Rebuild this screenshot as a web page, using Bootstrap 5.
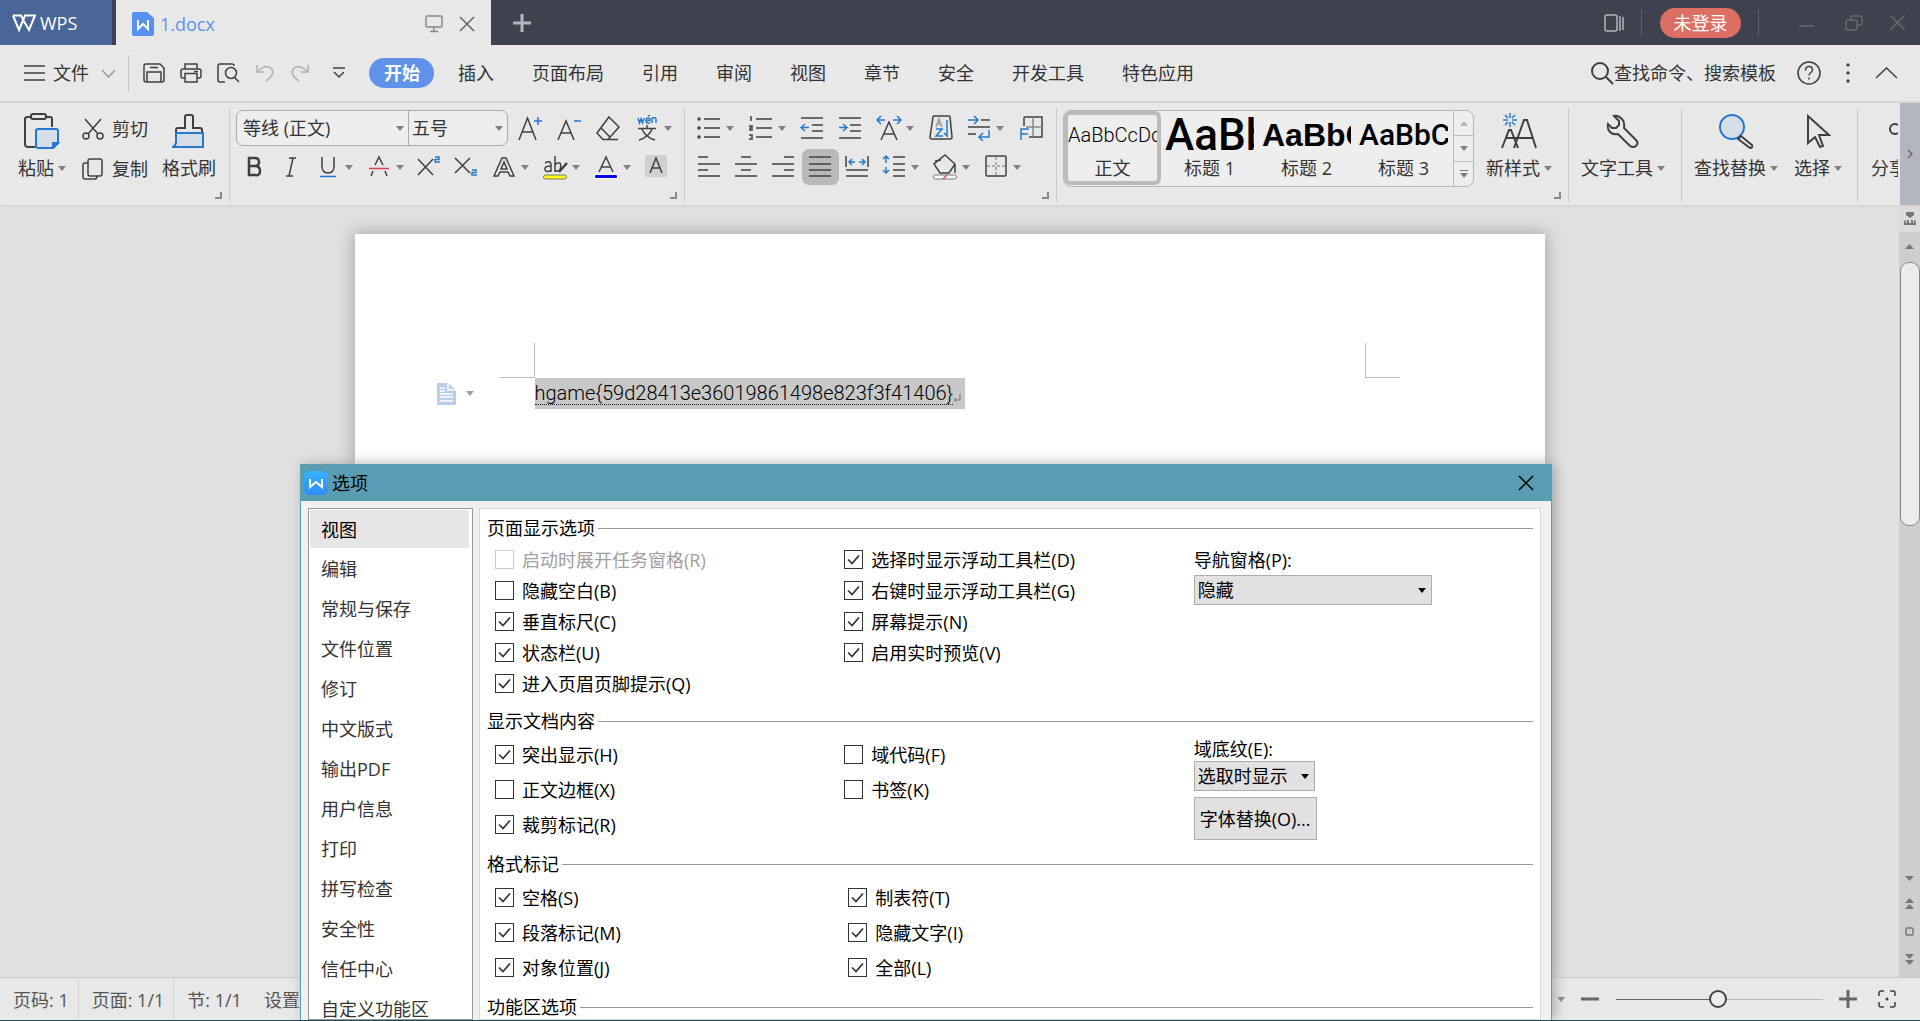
<!DOCTYPE html>
<html lang="zh-CN">
<head>
<meta charset="utf-8">
<meta name="viewport" content="width=device-width, initial-scale=1">
<title>1.docx - WPS</title>
<link href="https://cdn.jsdelivr.net/npm/bootstrap@5.3.0/dist/css/bootstrap.min.css" rel="stylesheet">
<style>
:root{--ink:#404040;--blue:#2478d0;--tri:url("data:image/svg+xml,%3Csvg xmlns='http://www.w3.org/2000/svg' viewBox='0 0 8 5'%3E%3Cpath d='M0 0h8L4 5z' fill='%23808080'/%3E%3C/svg%3E");--trib:url("data:image/svg+xml,%3Csvg xmlns='http://www.w3.org/2000/svg' viewBox='0 0 8 5'%3E%3Cpath d='M0 0h8L4 5z' fill='%23000'/%3E%3C/svg%3E")}
body{font-family:"Open Sans","Noto Sans CJK SC",sans-serif;font-size:18px;font-weight:400;line-height:24px;color:#333;background:#e8e8e8;border-bottom:1px solid #1c4c5e}
button,select,input{font:inherit;color:inherit}
button{background:none;border:0;padding:0;white-space:nowrap}
a{color:inherit;text-decoration:none}
svg{display:block;flex:none;fill:none;stroke:var(--ink);stroke-width:1.5}
svg .b{stroke:var(--blue)}
svg .l{stroke:var(--blue);fill:#d5dee7}
/* title bar */
.titlebar{height:45px;background:#3f424e}
.titlebar svg{stroke:#b4b6bd}
.wps-home{width:112px;background:#496697;color:#fff;margin-right:4px;padding:1px 0 0 12px}
.doctab{width:375px;background:#e8e8e8;color:#5b93ee;padding:2px 16px 0 16px}
.doctab svg{stroke:#888}
.tbsep{width:1px;height:28px;background:#5b5e69}
.login{width:81px;height:30px;border-radius:15px;background:#db6f63;color:#fff}
.titlebar .dim{stroke:#656873}
/* menu */
.menubar{height:58px;border-bottom:2px solid #d6d6d6}
.menubar .navitems{gap:38px;margin-left:24px}
.current{background:#6092ea;color:#fff;font-weight:700;border-radius:15px;padding:3px 15px;width:65px;margin-right:-14px}
.vsep{width:1px;height:36px;background:#c4c4c4;margin:0 14px 0 12px}
/* ribbon */
.ribbon{height:102px;box-shadow:0 1px 2px #ccc;z-index:1}
.rgroup{position:relative;border-right:1px solid #ccc;height:94px;margin-top:5px}
.launch{position:absolute;right:7px;bottom:3px;width:7px;height:7px;border:solid #8a8a8a;border-width:0 2px 2px 0}
.bigbtn{display:flex;flex-direction:column;align-items:center;gap:7px;padding-top:5px}
.lab{display:flex;align-items:center;gap:4px}
.tri{width:8px;height:5px;background:var(--tri);flex:none}
.tri.up{transform:rotate(180deg)}
.toolrow{height:36px;margin-bottom:3px}
.tool{display:flex;align-items:center;width:37px;height:36px;padding-left:5px;border-radius:7px}
.tool.dd{width:51px;gap:4px}
.tool.on{background:#b9b9b9}
.fontbox{height:36px;border:1px solid #aaa;background:#eee var(--tri) no-repeat right 4px center/8px 5px;appearance:none;padding:0 6px}
.fontname{width:173px;border-radius:7px 0 0 7px}
.fontsize{width:100px;border-radius:0 7px 7px 0;margin-left:-1px;padding-left:3px}
.gallery{width:411px;height:77px;border:1px solid #b6b6b6;border-radius:8px;background:#eee;overflow:hidden}
.stylecell{width:97px;height:74px;border:4px solid transparent;border-radius:6px;overflow:hidden;display:flex;flex-direction:column}
.stylecell.on{border-color:#bbb}
.sample{height:41px;width:89px;line-height:40px;color:#000;overflow:hidden;text-align:left;font-family:Roboto,sans-serif;font-weight:500}
.stylecell>span+span{width:89px}
.s0{font-size:20px;font-weight:300}.s1{font-size:44px}.s2{font-size:32px;font-family:"Liberation Sans",sans-serif;font-weight:700}.s3{font-size:30px}
.galscroll{width:20px;border-left:1px solid #bbb}
.galscroll button{flex:1;display:flex;flex-direction:column;align-items:center;justify-content:center;gap:2px}
.galscroll button+button{border-top:1px solid #bbb}
.galscroll i.bar{width:8px;height:1px;background:#777}
.more{width:20px;background:#b3b6c0}
/* document */
.work{background:#e1e1e1;min-height:0}
.page{width:1190px;margin:29px auto 0;background:#fff;box-shadow:0 0 16px 2px #a8a8a8;padding-top:109px}
.cornerbox{width:35px;height:35px;border:solid #bbb;border-width:0 0 1px 0}
.cl{border-right-width:1px}.cr{border-left-width:1px}
.picked{background:#c8c8c8;color:#000;font-family:Roboto,sans-serif;font-size:20px;font-weight:300;height:31px;padding-right:4px}
.picked span{border-bottom:1px dotted #222;line-height:22px}
.vscroll{width:21px;background:#cecece}
.vscroll svg{stroke:none;fill:#777}
.ruler{height:27px;background:#dcdcdc;width:100%}
.thumb{width:20px;height:264px;border:1px solid #888;border-radius:9px;background:#ececec}
/* status */
.status{height:43px;border-top:1px solid #c8c8c8;color:#555}
.status .cell{line-height:36px;padding:2px 9px 0 13px}
.status .cell+.cell{border-left:1px solid #d2d2d2}
.zoomer{appearance:none;width:207px;height:20px;background:linear-gradient(90deg,#666 50%,#b8b8b8 50%) center/100% 1px no-repeat}
.zoomer::-webkit-slider-thumb{appearance:none;width:18px;height:18px;border:2px solid #444;border-radius:50%;background:#eee}
/* options dialog */
.dlg{position:absolute;left:300px;top:464px;bottom:0;width:1252px;background:#f0f0f0;border:solid #5c9fb4;border-width:0 1px;z-index:5;overflow:hidden;box-shadow:3px 0 12px #aaa;color:#000}
.dlgtitle{height:37px;background:#5a9db3;padding:0 17px 0 3px}
.dlgside{width:165px;border:1px solid #999;background:#fff;padding:1px 3px 0 1px;color:#333}
.dlgside a{display:block;padding:8px 11px;height:40px}
.dlgside a.on{background:#e6e6e6;height:38px;margin-bottom:1px;color:#000}
.dlgpane{border:1px solid #d9d9d9;background:#fff;padding:7px 0 0}
.legendrow{margin:0 7px 0 7px;gap:3px}
.legendrow hr{flex:1;margin:0;border-top:1px solid #999;opacity:1}
.optcols{padding:4px 0 10px 15px;margin-right:-3px}
.opt{display:flex;align-items:center;gap:8px;white-space:nowrap}
.r31 .opt{height:31px}.r35 .opt{height:35px}
.opt input{appearance:none;width:19px;height:19px;border:1px solid #333;background:#fff;margin:0;flex:none}
.opt input:checked{background:#fff url("data:image/svg+xml,%3Csvg xmlns='http://www.w3.org/2000/svg' viewBox='0 0 17 17'%3E%3Cpath d='M3 8.500l4 4 7-8' fill='none' stroke='%23333' stroke-width='1.7'/%3E%3C/svg%3E")}
.opt.off{color:#a0a0a0}.opt.off input{border-color:#ccc}
.picksel{appearance:none;height:30px;border:1px solid #adadad;border-radius:0;background:#e1e1e1 var(--trib) no-repeat right 5px center/8px 5px;padding:0 3px;display:block}
.pushbtn{height:43px;width:123px;border:1px solid #adadad;background:#e1e1e1;margin-top:6px}
.w238{width:238px}.w121{width:121px}
</style>
</head>
<body class="vh-100 d-flex flex-column overflow-hidden position-relative">
<header class="titlebar d-flex align-items-stretch">
  <button class="wps-home d-flex align-items-center gap-1"><svg width="24" height="18" viewBox="0 0 24 18" style="stroke:#fff;stroke-width:2"><path d="M1 1.500h8l4 8M1 1.500L7 16l6-14.500h10L17 16l-4-7"/></svg>WPS</button>
  <div class="doctab d-flex align-items-center">
    <svg width="22" height="24" viewBox="0 0 22 24" style="stroke:none"><path d="M2 0h13l7 6v16q0 2-2 2H2q-2 0-2-2V2Q0 0 2 0z" fill="#5590f2"/><path d="M6 8v9l5-5 5 5V8" stroke="#fff" stroke-width="2"/></svg>
    <span class="ms-1 me-auto" style="padding-left:2px">1.docx</span>
    <svg width="18" height="18" viewBox="0 0 18 18"><rect x="1" y="1" width="16" height="11" rx="1"/><path d="M9 12v4M5 16.500h8"/></svg>
    <button class="ms-3" aria-label="关闭"><svg width="16" height="16" viewBox="0 0 16 16" style="stroke:#666"><path d="M1 1l14 14M15 1L1 15"/></svg></button>
  </div>
  <button class="me-auto" style="padding-left:22px" aria-label="新建"><svg width="18" height="18" viewBox="0 0 18 18" style="stroke-width:3"><path d="M9 0v18M0 9h18"/></svg></button>
  <div class="d-flex align-items-center">
    <svg width="20" height="18" viewBox="0 0 20 18"><rect x="1" y="1" width="12" height="16" rx="2"/><path d="M16 2v15M19 3v13"/></svg>
    <span class="tbsep" style="margin:0 18px 0 17px"></span>
    <button class="login">未登录</button>
    <span class="tbsep me-4" style="margin-left:17px"></span>
    <svg class="dim ms-3" width="15" height="16" viewBox="0 0 15 16"><path d="M0 11h15"/></svg>
    <svg class="dim" style="margin:0 26px 0 28px" width="22" height="16" viewBox="0 0 22 16"><rect x="4" y="5" width="11" height="10" rx="2"/><path d="M9 5V3q0-2 2-2h7q2 0 2 2v5q0 2-2 2h-3"/></svg>
    <svg class="dim" style="margin-right:15px" width="15" height="15" viewBox="0 0 15 15"><path d="M0 0l15 15M15 0L0 15"/></svg>
  </div>
</header>

<nav class="menubar d-flex align-items-center">
  <button class="d-flex align-items-center gap-2 ms-4"><svg width="21" height="16" viewBox="0 0 21 16"><path d="M0 1h21M0 8h21M0 15h21"/></svg>文件<svg class="ms-1" width="15" height="9" viewBox="0 0 15 9" style="stroke:#999"><path d="M1 1l6.500 7L14 1"/></svg></button>
  <span class="vsep"></span>
  <div class="d-flex align-items-center" style="gap:15px">
    <button aria-label="保存"><svg width="22" height="20" viewBox="0 0 22 20"><path d="M3 1h14l4 4v12q0 2-2 2H3q-2 0-2-2V3q0-2 2-2zM4 19V9h14v10M7 4.500h8"/></svg></button>
    <button aria-label="打印"><svg width="22" height="20" viewBox="0 0 22 20"><path d="M5 6V1h12v5M5 15H3q-2 0-2-2V8q0-2 2-2h16q2 0 2 2v5q0 2-2 2h-2M5 10.500h12V19H5zM14 8.500h4"/></svg></button>
    <button aria-label="打印预览"><svg width="23" height="20" viewBox="0 0 23 20"><path d="M8 19H3q-2 0-2-2V3q0-2 2-2h12q2 0 2 2M17 14l5 5"/><circle cx="14" cy="10" r="5.500"/></svg></button>
    <button aria-label="撤销"><svg width="20" height="18" viewBox="0 0 20 18" style="stroke:#b0b0b0"><path d="M2 1v7h7M2 8q8-8 14-4 5 6-5 13"/></svg></button>
    <button aria-label="恢复"><svg width="20" height="18" viewBox="0 0 20 18" style="stroke:#b0b0b0"><path d="M18 1v7h-7M18 8Q10 0 4 4q-5 6 5 13"/></svg></button>
    <button class="ms-2" aria-label="更多"><svg width="12" height="12" viewBox="0 0 12 12"><path d="M0 1h12M1 5l5 5 5-5"/></svg></button>
  </div>
  <div class="navitems d-flex align-items-center flex-grow-1 text-nowrap">
    <a href="#" class="current">开始</a><a href="#">插入</a><a href="#">页面布局</a><a href="#">引用</a><a href="#">审阅</a><a href="#">视图</a><a href="#">章节</a><a href="#">安全</a><a href="#">开发工具</a><a href="#">特色应用</a>
  </div>
  <button class="d-flex align-items-center"><svg width="24" height="24" viewBox="0 0 24 24" style="stroke-width:2"><circle cx="10" cy="10" r="8"/><path d="M16 16l7 7"/></svg>查找命令、搜索模板</button>
  <button style="margin:0 25px 0 21px" aria-label="帮助"><svg width="24" height="24" viewBox="0 0 24 24"><circle cx="12" cy="12" r="11"/><path d="M8.500 9.500q0-4 3.500-4t3.500 3.500c0 2.500-3.500 2.500-3.500 5.500M12 16.500v2"/></svg></button>
  <button aria-label="选项"><svg width="4" height="20" viewBox="0 0 4 20" style="stroke:none;fill:#444"><circle cx="2" cy="2" r="1.700"/><circle cx="2" cy="10" r="1.700"/><circle cx="2" cy="18" r="1.700"/></svg></button>
  <button style="margin:0 23px 0 26px" aria-label="收起"><svg width="21" height="12" viewBox="0 0 21 12"><path d="M0 11L10.500 1 21 11"/></svg></button>
</nav>

<section class="ribbon d-flex">
 <div class="d-flex flex-grow-1 overflow-hidden">
  <div class="rgroup d-flex flex-shrink-0" style="width:230px;padding-left:18px">
    <button class="bigbtn"><svg width="36" height="36" viewBox="0 0 36 36" style="stroke-width:2"><path d="M11 34H4q-3 0-3-3V6q0-2 3-2h22q2 0 2 2v8"/><rect x="7" y="1" width="15" height="5" rx="2" fill="#e8e8e8"/><path class="l" d="M14 16h18q2 0 2 2v12l-5 5H14q-2 0-2-2V18q0-2 2-2z"/><path class="b" fill="#2478d0" d="M29 35v-5h5z"/></svg><span class="lab">粘贴<i class="tri"></i></span></button>
    <div class="d-flex flex-column gap-3" style="padding:9px 0 0 16px">
      <button class="d-flex align-items-center gap-2"><svg width="22" height="22" viewBox="0 0 22 22"><path d="M3 1l13 15M19 1L6 16"/><circle cx="4" cy="18" r="3"/><circle cx="18" cy="18" r="3"/></svg>剪切</button>
      <button class="d-flex align-items-center gap-2"><svg width="22" height="22" viewBox="0 0 22 22"><rect x="6" y="1" width="14" height="17" rx="2"/><path d="M6 5H3q-2 0-2 2v12q0 2 2 2h10q2 0 2-3"/></svg>复制</button>
    </div>
    <button class="bigbtn" style="margin-left:14px"><svg width="34" height="36" viewBox="0 0 34 36" style="stroke-width:2"><path d="M4 20v-3q0-2 2-2h7V4q0-2 2-2h4q2 0 2 2v11h7q2 0 2 2v3"/><path class="l" d="M4 20h27v14H1q3-2 3-5z"/></svg><span>格式刷</span></button>
    <i class="launch"></i>
  </div>
  <div class="rgroup flex-shrink-0" style="width:455px;padding:2px 0 0 6px">
    <div class="d-flex toolrow">
      <select class="fontbox fontname" aria-label="字体"><option>等线 (正文)</option></select><select class="fontbox fontsize" aria-label="字号"><option>五号</option></select>
      <div class="d-flex ms-1" style="gap:2px">
      <button class="tool" aria-label="增大字号"><svg width="26" height="26" viewBox="0 0 26 26"><path d="M2 25L10.500 3 19 25M5 17h11"/><path class="b" d="M17 6h8M21 2v8"/></svg></button>
      <button class="tool" aria-label="减小字号"><svg width="26" height="26" viewBox="0 0 26 26"><path d="M2 25L10 6l8 19M5 18h10"/><path class="b" d="M18 6h7"/></svg></button>
      <button class="tool" aria-label="清除格式"><svg width="26" height="26" viewBox="0 0 26 26"><path d="M14 2l10 10-11 12.500H8l-6-6.500zM6 13l9 9M8 24.500h15"/></svg></button>
      <button class="tool dd" aria-label="拼音指南"><svg width="26" height="26" viewBox="0 0 26 26"><path class="b" d="M4 3l1.500 5L7 4l1.500 4L10 3M12 5.500h4Q16 3 14 3t-2 2.500T14 8h2M14 1l2-1M18 8V3q4-1 4 1v4"/><path d="M13 10v3M4 13.500h18M8 14q3 8 13 11M18 14q-3 8-13 11"/></svg><i class="tri"></i></button>
      </div>
    </div>
    <div class="d-flex toolrow">
      <button class="tool" aria-label="加粗"><svg width="26" height="26" viewBox="0 0 26 26" style="stroke-width:2.500"><path d="M8 4h6q4 0 4 4t-4 4H8zM8 12h6q5 0 5 5t-5 4H8z"/></svg></button>
      <button class="tool" aria-label="倾斜"><svg width="26" height="26" viewBox="0 0 26 26"><path d="M11 4h7M8 22h7M15 4l-4 18"/></svg></button>
      <button class="tool dd" aria-label="下划线"><svg width="26" height="26" viewBox="0 0 26 26"><path d="M7 3v9q0 7 6 7t6-7V3"/><path class="b" d="M5 22.500h16"/></svg><i class="tri"></i></button>
      <button class="tool dd" aria-label="删除线"><svg width="26" height="26" viewBox="0 0 26 26"><path d="M5 22l2-5M21 22l-2-5M9 11l4-8 4 8"/><path stroke="#d8444a" d="M3 14.500h20"/></svg><i class="tri"></i></button>
      <button class="tool" aria-label="上标"><svg width="26" height="26" viewBox="0 0 26 26"><path d="M1 5l15 16M16 5L1 21"/><path class="b" d="M18 3h4v2.500h-4V8h5"/></svg></button>
      <button class="tool" aria-label="下标"><svg width="26" height="26" viewBox="0 0 26 26"><path d="M1 4l15 15M16 4L1 19"/><path class="b" d="M18 16h4v2.500h-4V21h5"/></svg></button>
      <button class="tool dd" aria-label="文字效果"><svg width="26" height="26" viewBox="0 0 26 26"><path d="M3 22L11 4h4l8 18h-4l-2-4H9l-2 4zM10 15l3-7 3 7z"/></svg><i class="tri"></i></button>
      <button class="tool dd" aria-label="突出显示"><svg width="26" height="26" viewBox="0 0 26 26"><path d="M3 9q5-3 6 1v8M9 12q-7 0-6 3.500t6 1M13 2v16M13 11q2-3 5-2 2 4-1 8-2 1-4-1"/><path d="M25 9l-8 9" stroke-width="2.500"/><rect x="1.500" y="21" width="23" height="4" rx="2" fill="#ff0" stroke="#777" stroke-width="1"/></svg><i class="tri"></i></button>
      <button class="tool dd" aria-label="字体颜色"><svg width="26" height="26" viewBox="0 0 26 26"><path d="M6 18l7-15 7 15M8 13h10"/><rect x="1" y="20" width="24" height="5" rx="2" fill="#fff" stroke="none"/><rect x="2" y="21" width="22" height="3" rx="1" fill="#00f" stroke="none"/></svg><i class="tri"></i></button>
      <button class="tool" aria-label="字符底纹"><svg width="26" height="26" viewBox="0 0 26 26"><rect x="1" y="1" width="22" height="22" rx="1" fill="#d0d0d0" stroke="none"/><path d="M6 19l6-15 6 15M8 14h8"/></svg></button>
    </div>
    <i class="launch"></i>
  </div>
  <div class="rgroup flex-shrink-0" style="width:372px;padding:2px 0 0 6px">
    <div class="d-flex toolrow" style="gap:1px">
      <button class="tool dd" aria-label="项目符号"><svg width="26" height="26" viewBox="0 0 26 26"><path d="M8 4h16M8 13h16M8 22h16"/><circle cx="3" cy="4" r="1"/><circle cx="3" cy="13" r="1"/><circle cx="3" cy="22" r="1"/></svg><i class="tri"></i></button>
      <button class="tool dd" aria-label="编号"><svg width="26" height="26" viewBox="0 0 26 26"><path d="M8 4h16M8 13h16M8 22h16M2 2h1v4M1 11h3v2H2v2h3M1 20h3v4H1"/></svg><i class="tri"></i></button>
      <button class="tool" aria-label="减少缩进"><svg width="26" height="26" viewBox="0 0 26 26"><path d="M1 3h22M12 10h11M12 16h11M1 23h22"/><path class="b" d="M1 12.500h8M5 9l-4 3.500L5 16"/></svg></button>
      <button class="tool" aria-label="增加缩进"><svg width="26" height="26" viewBox="0 0 26 26"><path d="M1 3h22M12 10h11M12 16h11M1 23h22"/><path class="b" d="M1 12.500h8M5 9l4 3.500L5 16"/></svg></button>
      <button class="tool dd" aria-label="中文版式"><svg width="26" height="26" viewBox="0 0 26 26"><path d="M5 25l8-18 8 18M8 19h10"/><path class="b" d="M1 5h8M5 1L1 5l4 4M17 5h8M21 1l4 4-4 4"/></svg><i class="tri"></i></button>
      <button class="tool" aria-label="排序"><svg width="26" height="26" viewBox="0 0 26 26"><path d="M6 1h15q1 0 1 1l2 20q0 2-2 2H4q-2 0-2-2L5 2q0-1 1-1z"/><path stroke="#999" d="M8 12l3-8 3 8M9 9h4"/><path class="b" d="M8 14h6l-6 7h7M19 5v16l-3-3"/></svg></button>
      <button class="tool dd" aria-label="制表位"><svg width="26" height="26" viewBox="0 0 26 26"><path d="M15 5h9M2 12h22M2 19h8"/><path class="b" d="M2 5h9M8 1l4 4-4 4M23 15v7H13M17 18l-4 4 4 4"/></svg><i class="tri"></i></button>
      <button class="tool" aria-label="插入表格"><svg width="26" height="26" viewBox="0 0 26 26"><path d="M6 11V3q0-1 1-1h17v20H11"/><path stroke="#888" d="M15 2v20M8 12h16"/><path class="b" d="M3 25V14h8M3 19h7"/></svg></button>
    </div>
    <div class="d-flex toolrow">
      <button class="tool" aria-label="左对齐"><svg width="26" height="26" viewBox="0 0 26 26"><path d="M2 3h10M2 10h22M2 16h10M2 22h22"/></svg></button>
      <button class="tool" aria-label="居中"><svg width="26" height="26" viewBox="0 0 26 26"><path d="M8 3h10M2 10h22M8 16h10M2 22h22"/></svg></button>
      <button class="tool" aria-label="右对齐"><svg width="26" height="26" viewBox="0 0 26 26"><path d="M14 3h10M2 10h22M14 16h10M2 22h22"/></svg></button>
      <button class="tool on" aria-label="两端对齐"><svg width="26" height="26" viewBox="0 0 26 26"><path d="M2 3h22M2 10h22M2 16h22M2 22h22"/></svg></button>
      <button class="tool" aria-label="分散对齐"><svg width="26" height="26" viewBox="0 0 26 26"><path d="M2 2v11M24 2v11M2 16h22M2 22h22"/><path class="b" d="M5 8h6M8 5L5 8l3 3M15 8h6M18 5l3 3-3 3"/></svg></button>
      <button class="tool dd" aria-label="行距"><svg width="26" height="26" viewBox="0 0 26 26"><path d="M12 3h12M12 10h12M12 16h12M12 22h12"/><path class="b" d="M5 2v7M2 5l3-3 3 3M5 13v6M2 16l3 3 3-3"/></svg><i class="tri"></i></button>
      <button class="tool dd" aria-label="底纹颜色"><svg width="26" height="26" viewBox="0 0 26 26"><path d="M13 1l10 9-6 9H8l-6-9zM3 7l6-1M23 10v9"/><rect x="1.500" y="21" width="23" height="4" rx="2" fill="#fff" stroke="#777" stroke-width="1"/><path stroke="#e05050" d="M11 25l4-4"/></svg><i class="tri"></i></button>
      <button class="tool dd" aria-label="边框"><svg width="26" height="26" viewBox="0 0 26 26"><rect x="3" y="2" width="20" height="20" rx="1"/><path stroke="#999" stroke-dasharray="3 2" d="M13 3v18M4 12h18"/></svg><i class="tri"></i></button>
    </div>
    <i class="launch"></i>
  </div>
  <div class="rgroup d-flex flex-shrink-0" style="width:512px;padding-left:6px">
    <div class="gallery d-flex" style="margin-top:2px">
      <button class="stylecell on"><span class="sample s0">AaBbCcDd</span><span>正文</span></button>
      <button class="stylecell"><span class="sample s1">AaBb</span><span>标题 1</span></button>
      <button class="stylecell"><span class="sample s2">AaBbC</span><span>标题 2</span></button>
      <button class="stylecell"><span class="sample s3">AaBbC</span><span>标题 3</span></button>
      <div class="galscroll d-flex flex-column ms-auto"><button aria-label="上一行"><i class="tri up opacity-50"></i></button><button aria-label="下一行"><i class="tri"></i></button><button aria-label="展开"><i class="bar"></i><i class="tri"></i></button></div>
    </div>
    <button class="bigbtn" style="margin-left:12px"><svg width="36" height="36" viewBox="0 0 36 36" style="stroke-width:2"><path d="M1 35L8 17h2l7 18M4 25h27M13 35L23 7h3l9 28"/><path class="b" d="M9 0v5M9 9v5M2 7h5M11 7h5M4 2l3 3M14 2l-3 3M4 12l3-3M14 12l-3-3" stroke-width="1.500"/></svg><span class="lab">新样式<i class="tri"></i></span></button>
    <i class="launch"></i>
  </div>
  <div class="rgroup d-flex flex-shrink-0" style="width:113px;padding-left:12px">
    <button class="bigbtn"><svg width="36" height="36" viewBox="0 0 36 36" style="stroke-width:2"><path d="M9 3l5 5v4l-3 3H7L3 11q-1 5 2 8 3 3 8 2l12 12q3 2 6 0 3-3 0-6L19 15q1-6-2-9-4-4-8-3z"/></svg><span class="lab">文字工具<i class="tri"></i></span></button>
  </div>
  <div class="rgroup d-flex flex-shrink-0 gap-3" style="width:176px;padding-left:12px">
    <button class="bigbtn"><svg width="36" height="36" viewBox="0 0 36 36" style="stroke-width:2"><circle class="l" cx="14" cy="14" r="12"/><path d="M20 26l3-3 11 9q1 3-2 3z"/></svg><span class="lab">查找替换<i class="tri"></i></span></button>
    <button class="bigbtn"><svg width="26" height="36" viewBox="0 0 26 36" style="stroke-width:2"><path d="M3 3v27l7-6 5 10 3-1-4-11h10z"/></svg><span class="lab">选择<i class="tri"></i></span></button>
  </div>
  <div class="d-flex flex-shrink-1 overflow-hidden" style="margin:5px 2px 0 0;padding-left:13px">
    <button class="bigbtn"><svg width="36" height="36" viewBox="0 0 36 36" style="stroke-width:2"><circle cx="24" cy="16" r="5"/></svg><span>分享</span></button>
  </div>
 </div>
 <button class="more d-flex align-items-center justify-content-center" aria-label="更多"><svg width="6" height="12" viewBox="0 0 6 12"><path d="M1 2l4 4-4 4" stroke="#666"/></svg></button>
</section>

<main class="work d-flex flex-grow-1">
  <div class="flex-grow-1 d-flex overflow-hidden">
    <article class="page">
      <div class="d-flex justify-content-between" style="padding:0 145px"><div class="cornerbox cl"></div><div class="cornerbox cr"></div></div>
      <div class="d-flex align-items-center" style="padding-left:82px">
        <svg width="19" height="22" viewBox="0 0 19 22" style="stroke:none"><path d="M0 0h11l8 7v15H0z" fill="#b9cdec"/><path d="M11 0v7h8M3 5h5M3 8h5M3 11h13M3 14h13M3 18h13" stroke="#fff" stroke-width="1.500"/></svg><i class="tri opacity-75" style="margin:0 61px 0 10px"></i>
        <span class="picked d-flex align-items-center"><span>hgame{59d28413e36019861498e823f3f41406}</span><svg width="8" height="10" viewBox="0 0 8 10" style="stroke:#777;stroke-width:1;margin-top:10px"><path d="M7 0v6H1M3 4L1 6l2 2"/></svg></span>
      </div>
    </article>
  </div>
  <div class="vscroll d-flex flex-column align-items-center">
    <div class="ruler d-flex align-items-center justify-content-center"><svg width="12" height="13" viewBox="0 0 12 13"><path d="M2 0h8v3L6 6 2 3zM0 11q0-3 2-3v3h1V8h2v3h2V8h2v3h1V8q2 0 2 3v2H0z"/></svg></div>
    <svg width="9" height="5" viewBox="0 0 9 5" style="margin:12px 0 13px"><path d="M0 5h9L4.500 0z"/></svg>
    <div class="thumb mb-auto"></div>
    <svg width="9" height="89" viewBox="0 0 9 89" style="margin-bottom:12px"><path d="M0 0h9L4.500 5zM0 27h9l-4.500-5zM0 33h9l-4.500-5zM0 78h9l-4.500 5zM0 84h9l-4.500 5z"/><rect x="1" y="52" width="7" height="7" rx="1" fill="none" stroke="#777" stroke-width="1.500"/></svg>
  </div>
</main>

<footer class="status d-flex align-items-center text-nowrap">
  <span class="cell">页码: 1</span><span class="cell">页面: 1/1</span><span class="cell">节: 1/1</span><span style="padding:2px 0 0 13px">设置值: 3.5厘米</span>
  <i class="tri ms-auto"></i>
  <button style="margin:0 17px 0 16px" aria-label="缩小"><svg width="18" height="18" viewBox="0 0 18 18" style="stroke-width:3;stroke:#666"><path d="M0 9h18"/></svg></button>
  <input type="range" class="zoomer" min="0" max="100" value="49" aria-label="缩放">
  <button style="margin:0 21px 0 16px" aria-label="放大"><svg width="18" height="18" viewBox="0 0 18 18" style="stroke-width:3;stroke:#666"><path d="M0 9h18M9 0v18"/></svg></button>
  <button class="me-4" aria-label="全屏"><svg width="18" height="18" viewBox="0 0 18 18"><path d="M1 6V3q0-2 2-2h3M12 1h3q2 0 2 2v3M17 12v3q0 2-2 2h-3M6 17H3q-2 0-2-2v-3"/><circle cx="9" cy="9" r="1.500" style="fill:#444;stroke:none"/></svg></button>
</footer>

<section class="dlg d-flex flex-column" role="dialog" aria-label="选项">
  <div class="dlgtitle d-flex align-items-center flex-shrink-0">
    <svg width="24" height="24" viewBox="0 0 24 24" style="stroke:none"><defs><linearGradient id="g" x2="0" y2="1"><stop stop-color="#36b3ff"/><stop offset="1" stop-color="#2f8bff"/></linearGradient></defs><rect width="24" height="24" rx="5" fill="url(#g)"/><path d="M6 8v8l6-5 6 5V8" stroke="#fff" stroke-width="2"/></svg>
    <span class="ms-1 me-auto">选项</span>
    <button aria-label="关闭对话框"><svg width="16" height="16" viewBox="0 0 16 16" style="stroke:#000"><path d="M1 1l14 14M15 1L1 15"/></svg></button>
  </div>
  <div class="d-flex flex-grow-1 overflow-hidden" style="padding:7px 10px 0 7px;gap:6px">
    <nav class="dlgside flex-shrink-0 text-nowrap">
      <a href="#" class="on">视图</a><a href="#">编辑</a><a href="#">常规与保存</a><a href="#">文件位置</a><a href="#">修订</a><a href="#">中文版式</a><a href="#">输出PDF</a><a href="#">用户信息</a><a href="#">打印</a><a href="#">拼写检查</a><a href="#">安全性</a><a href="#">信任中心</a><a href="#">自定义功能区</a>
    </nav>
    <div class="dlgpane flex-grow-1">
      <div class="legendrow d-flex align-items-center">页面显示选项<hr></div>
      <div class="optcols row g-0 r31">
        <div class="col-4">
          <label class="opt off"><input type="checkbox" disabled>启动时展开任务窗格(R)</label>
          <label class="opt"><input type="checkbox">隐藏空白(B)</label>
          <label class="opt"><input type="checkbox" checked>垂直标尺(C)</label>
          <label class="opt"><input type="checkbox" checked>状态栏(U)</label>
          <label class="opt"><input type="checkbox" checked>进入页眉页脚提示(Q)</label>
        </div>
        <div class="col-4">
          <label class="opt"><input type="checkbox" checked>选择时显示浮动工具栏(D)</label>
          <label class="opt"><input type="checkbox" checked>右键时显示浮动工具栏(G)</label>
          <label class="opt"><input type="checkbox" checked>屏幕提示(N)</label>
          <label class="opt"><input type="checkbox" checked>启用实时预览(V)</label>
        </div>
        <div class="col-4">
          <label class="opt" for="navpane">导航窗格(P):</label>
          <select id="navpane" class="picksel w238"><option>隐藏</option></select>
        </div>
      </div>
      <div class="legendrow d-flex align-items-center">显示文档内容<hr></div>
      <div class="optcols row g-0 r35">
        <div class="col-4">
          <label class="opt"><input type="checkbox" checked>突出显示(H)</label>
          <label class="opt"><input type="checkbox">正文边框(X)</label>
          <label class="opt"><input type="checkbox" checked>裁剪标记(R)</label>
        </div>
        <div class="col-4">
          <label class="opt"><input type="checkbox">域代码(F)</label>
          <label class="opt"><input type="checkbox">书签(K)</label>
        </div>
        <div class="col-4">
          <label class="d-block" for="shade">域底纹(E):</label>
          <select id="shade" class="picksel w121"><option>选取时显示</option></select>
          <button class="pushbtn">字体替换(O)...</button>
        </div>
      </div>
      <div class="legendrow d-flex align-items-center">格式标记<hr></div>
      <div class="optcols row g-0 r35">
        <div class="col-4">
          <label class="opt"><input type="checkbox" checked>空格(S)</label>
          <label class="opt"><input type="checkbox" checked>段落标记(M)</label>
          <label class="opt"><input type="checkbox" checked>对象位置(J)</label>
        </div>
        <div class="col-4 ps-1">
          <label class="opt"><input type="checkbox" checked>制表符(T)</label>
          <label class="opt"><input type="checkbox" checked>隐藏文字(I)</label>
          <label class="opt"><input type="checkbox" checked>全部(L)</label>
        </div>
      </div>
      <div class="legendrow d-flex align-items-center">功能区选项<hr></div>
    </div>
  </div>
</section>
<script src="https://cdn.jsdelivr.net/npm/bootstrap@5.3.0/dist/js/bootstrap.bundle.min.js"></script>
</body>
</html>
